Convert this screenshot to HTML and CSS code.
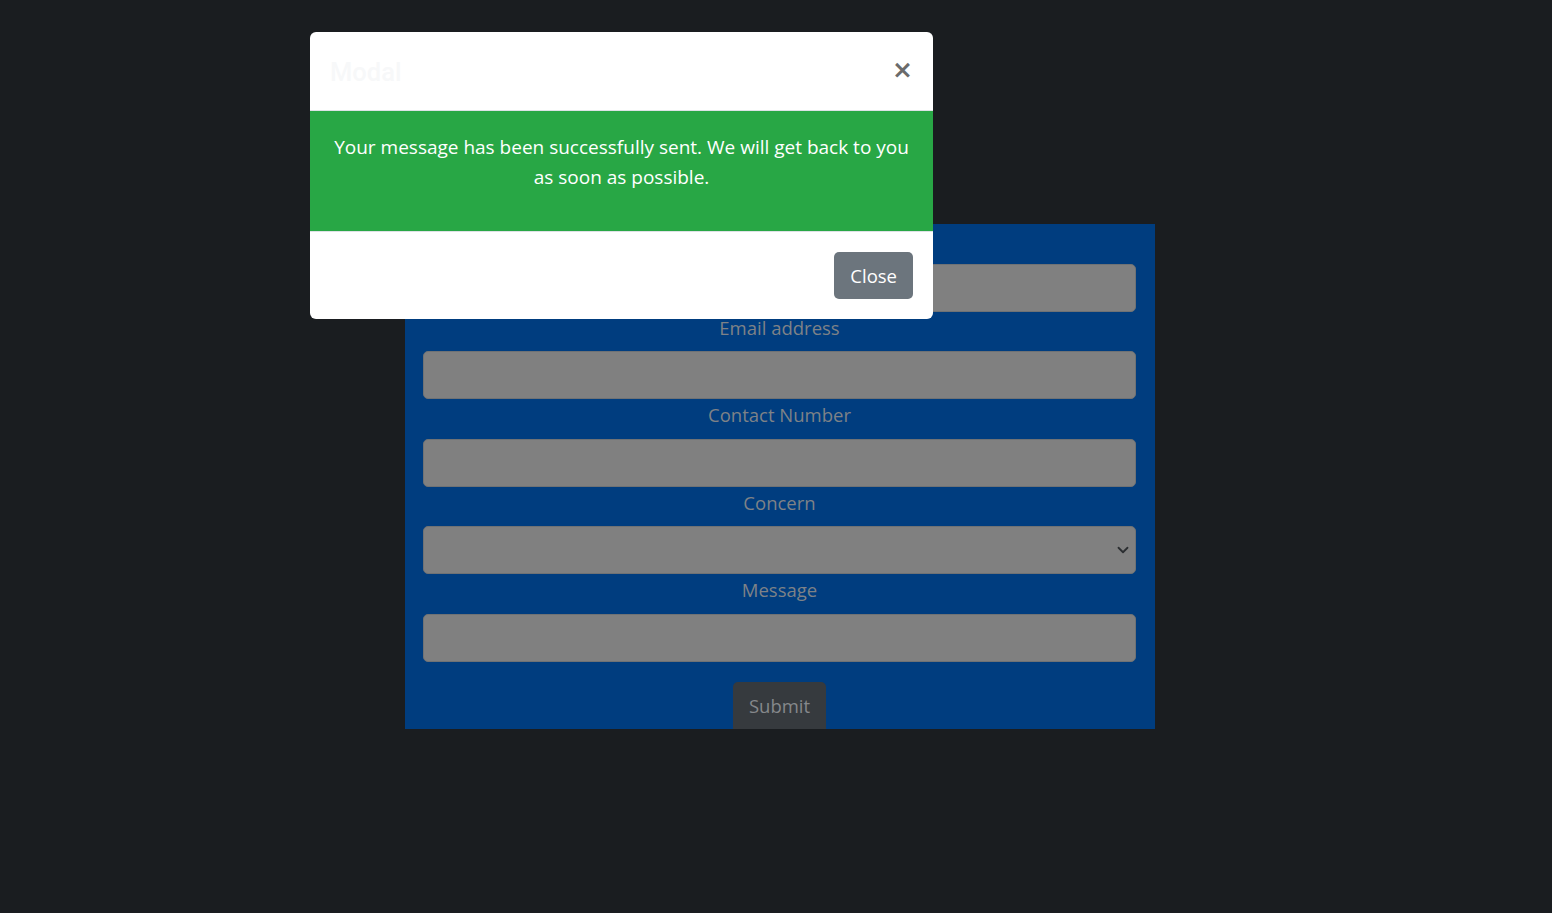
FILE: index.html
```html
<!DOCTYPE html>
<html lang="en">
<head>
<meta charset="utf-8">
<title>Contact</title>
<link rel="stylesheet" href="styles.css">
</head>
<body>
<main class="page">
  <form class="contact-form">
    <label class="field-label">Name</label>
    <div class="field"></div>
    <label class="field-label">Email address</label>
    <div class="field"></div>
    <label class="field-label">Contact Number</label>
    <div class="field"></div>
    <label class="field-label">Concern</label>
    <div class="field select-field">
      <svg class="chevron" width="12" height="12" viewBox="0 0 16 16"><path d="M2 5l6 6 6-6" fill="none" stroke="#2b2e31" stroke-width="2.4" stroke-linecap="round" stroke-linejoin="round"/></svg>
    </div>
    <label class="field-label">Message</label>
    <div class="field"></div>
    <div class="submit-row"><span class="submit-btn">Submit</span></div>
  </form>
</main>

<div class="modal">
  <div class="modal-header">
    <h5 class="modal-title">Modal</h5>
    <span class="modal-close">&times;</span>
  </div>
  <div class="modal-body">
    <p>Your message has been successfully sent. We will get back to you as soon as possible.</p>
  </div>
  <div class="modal-footer">
    <span class="btn-close">Close</span>
  </div>
</div>
</body>
</html>
```

FILE: styles.css
```css
* { box-sizing: border-box; }
html, body {
  margin: 0;
  padding: 0;
  height: 100%;
}
body {
  background: #1a1d20;
  font-family: "Open Sans", "Noto Sans", sans-serif;
  position: relative;
}
.page {
  display: flex;
  justify-content: flex-start;
  padding-top: 224px;
  padding-left: 405px;
}
.contact-form {
  width: 750px;
  background: #003d7f;
  padding: 0 19px 0 18px;
  display: flex;
  flex-direction: column;
}
.field-label {
  display: block;
  text-align: center;
  color: #7e8287;
  font-size: 18.5px;
  line-height: 30px;
  margin: 1px 0 8.5px;
}
.field {
  height: 48px;
  background: #808080;
  border: 1px solid #6f7275;
  border-radius: 5px;
  position: relative;
}
.select-field {
  display: flex;
  align-items: center;
  justify-content: flex-end;
  padding-right: 6px;
}
.submit-row {
  display: flex;
  justify-content: center;
  margin-top: 20.5px;
}
.submit-btn {
  display: inline-block;
  background: #363a3e;
  color: #85888b;
  font-size: 18.5px;
  line-height: 47px;
  height: 47px;
  padding: 0 16px;
  border-radius: 5px 5px 0 0;
}
.modal {
  position: absolute;
  left: 310px;
  top: 32px;
  width: 623px;
  background: #fff;
  border-radius: 6px;
  overflow: hidden;
}
.modal-header {
  height: 79px;
  border-bottom: 1px solid #dee2e6;
  display: flex;
  align-items: center;
  justify-content: space-between;
  padding: 0 20px;
}
.modal-title {
  margin: 0;
  font-size: 25.5px;
  font-weight: 500;
  color: #f7f8f9;
  font-family: "Roboto", "Open Sans", sans-serif;
  padding-top: 2px;
}
.modal-close {
  color: #6b6b6b;
  font-size: 25px;
  font-weight: 700;
  font-family: "DejaVu Sans", sans-serif;
  line-height: 1;
  margin-right: 0;
  margin-top: -4px;
}
.modal-body {
  background: #28a745;
  padding: 21px 20px 39px;
}
.modal-body p {
  margin: 0;
  color: #fff;
  font-size: 19px;
  line-height: 30px;
  text-align: center;
}
.modal-footer {
  border-top: 1px solid #dee2e6;
  display: flex;
  justify-content: flex-end;
  padding: 20px;
}
.btn-close {
  background: #6c757d;
  color: #fff;
  font-size: 18.5px;
  line-height: 47px;
  height: 47px;
  padding: 0 16px;
  border-radius: 5px;
}
```
